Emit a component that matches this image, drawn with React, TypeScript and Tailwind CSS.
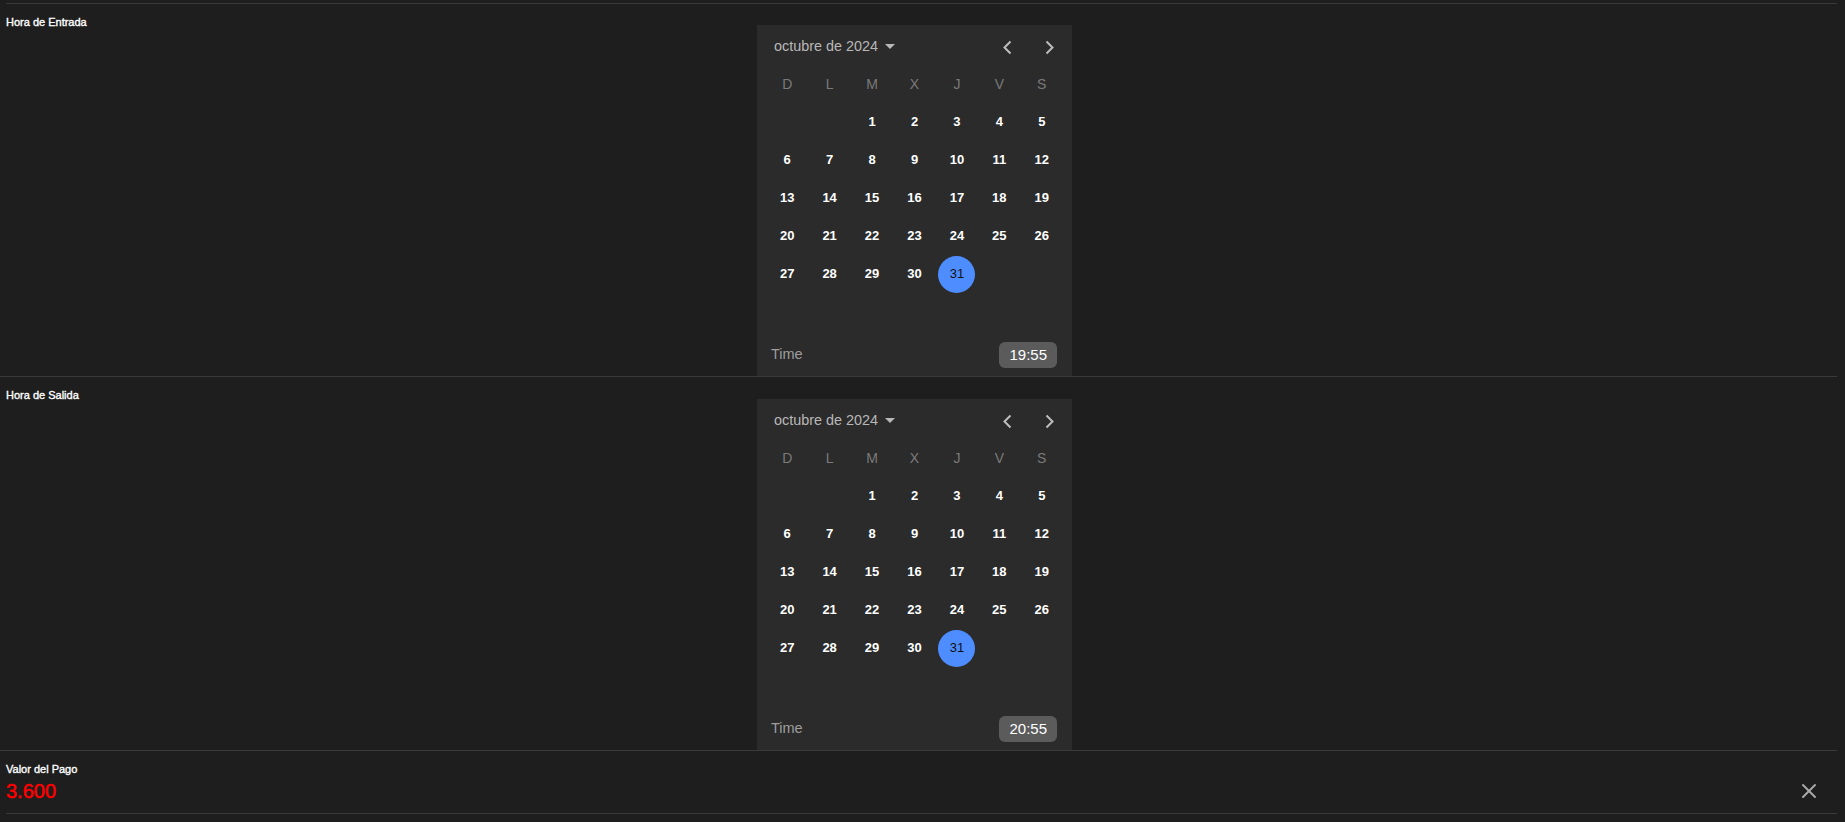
import { X } from "lucide-react";

const weekDays = ["D", "L", "M", "X", "J", "V", "S"];

// octubre 2024 starts on a Tuesday
const cells: (number | null)[] = [
  null,
  null,
  ...Array.from({ length: 31 }, (_, i) => i + 1),
];
while (cells.length < 42) cells.push(null);

function Chevron({ dir }: { dir: "left" | "right" }) {
  return (
    <button className="w-[24px] h-[24px] flex items-center justify-center">
      <svg width="10" height="15" viewBox="0 0 10 15" fill="none">
        <path
          d={dir === "left" ? "M8.5 1.5 2.5 7.5l6 6" : "M1.5 1.5l6 6-6 6"}
          stroke="#bdbdbd"
          strokeWidth="2"
        />
      </svg>
    </button>
  );
}

function Calendar({ selected, time }: { selected: number; time: string }) {
  return (
    <div className="flex justify-center pr-[8px]">
      <div className="w-[315px] h-[351px] bg-[#2b2b2b] flex flex-col">
        <div className="h-[40px] pt-[4px] flex items-center justify-between pl-[17px] pr-[10px]">
          <div className="flex items-center gap-[7px] text-[14.4px] text-[#b8b8b8]">
            <span>octubre de 2024</span>
            <svg width="10" height="5" viewBox="0 0 10 5">
              <path d="M0 0h10L5 5z" fill="#b8b8b8" />
            </svg>
          </div>
          <div className="flex items-center gap-[19px]">
            <Chevron dir="left" />
            <Chevron dir="right" />
          </div>
        </div>
        <div className="grid grid-cols-7 px-[9px]">
          {weekDays.map((d) => (
            <div
              key={d}
              className="h-[38px] flex items-center justify-center text-[14px] text-[#7a7a7a]"
            >
              {d}
            </div>
          ))}
          {cells.map((n, i) => (
            <div key={i} className="h-[38px] flex items-center justify-center">
              {n === selected ? (
                <span className="w-[37px] h-[37px] rounded-full bg-[#4d8dff] flex items-center justify-center text-[13px] text-[#111]">
                  {n}
                </span>
              ) : (
                <span className="text-[13px] font-bold text-white">{n}</span>
              )}
            </div>
          ))}
        </div>
        <div className="flex-1 flex items-center justify-between pt-[3px] pl-[14px] pr-[15px]">
          <span className="text-[14.5px] text-[#9e9e9e]">Time</span>
          <span className="h-[26px] px-[10px] rounded-md bg-[#5b5b5b] text-white text-[15px] flex items-center">
            {time}
          </span>
        </div>
      </div>
    </div>
  );
}

function Label({ children }: { children: React.ReactNode }) {
  return (
    <div className="h-[21px] pt-[13px] px-[6px] text-[11px] leading-[11px] text-white [-webkit-text-stroke:0.35px_white]">
      {children}
    </div>
  );
}

export default function App() {
  return (
    <div
      className="min-h-screen bg-[#1e1e1e] pr-[8px] pt-[3px]"
      style={{ fontFamily: '"Liberation Sans", Arial, sans-serif' }}
    >
      <div className="ml-[6px] border-t border-[#3a3a3a]" />
      <div className="border-b border-[#3a3a3a]">
        <Label>Hora de Entrada</Label>
        <Calendar selected={31} time="19:55" />
      </div>
      <div className="border-b border-[#3a3a3a]">
        <Label>Hora de Salida</Label>
        <div className="pt-[1px]">
          <Calendar selected={31} time="20:55" />
        </div>
      </div>
      <div className="ml-[6px] border-b border-[#3a3a3a] pb-[10px]">
        <div className="pt-[13px] text-[11px] leading-[11px] text-white [-webkit-text-stroke:0.35px_white]">
          Valor del Pago
        </div>
        <div className="mt-[4px] flex items-center justify-between">
          <span className="text-[20px] leading-[24px] text-[#ff0000] [-webkit-text-stroke:0.5px_#ff0000]">
            3.600
          </span>
          <X size={24} strokeWidth={2} className="mr-[16px] text-[#a8a8a8]" />
        </div>
      </div>
    </div>
  );
}
